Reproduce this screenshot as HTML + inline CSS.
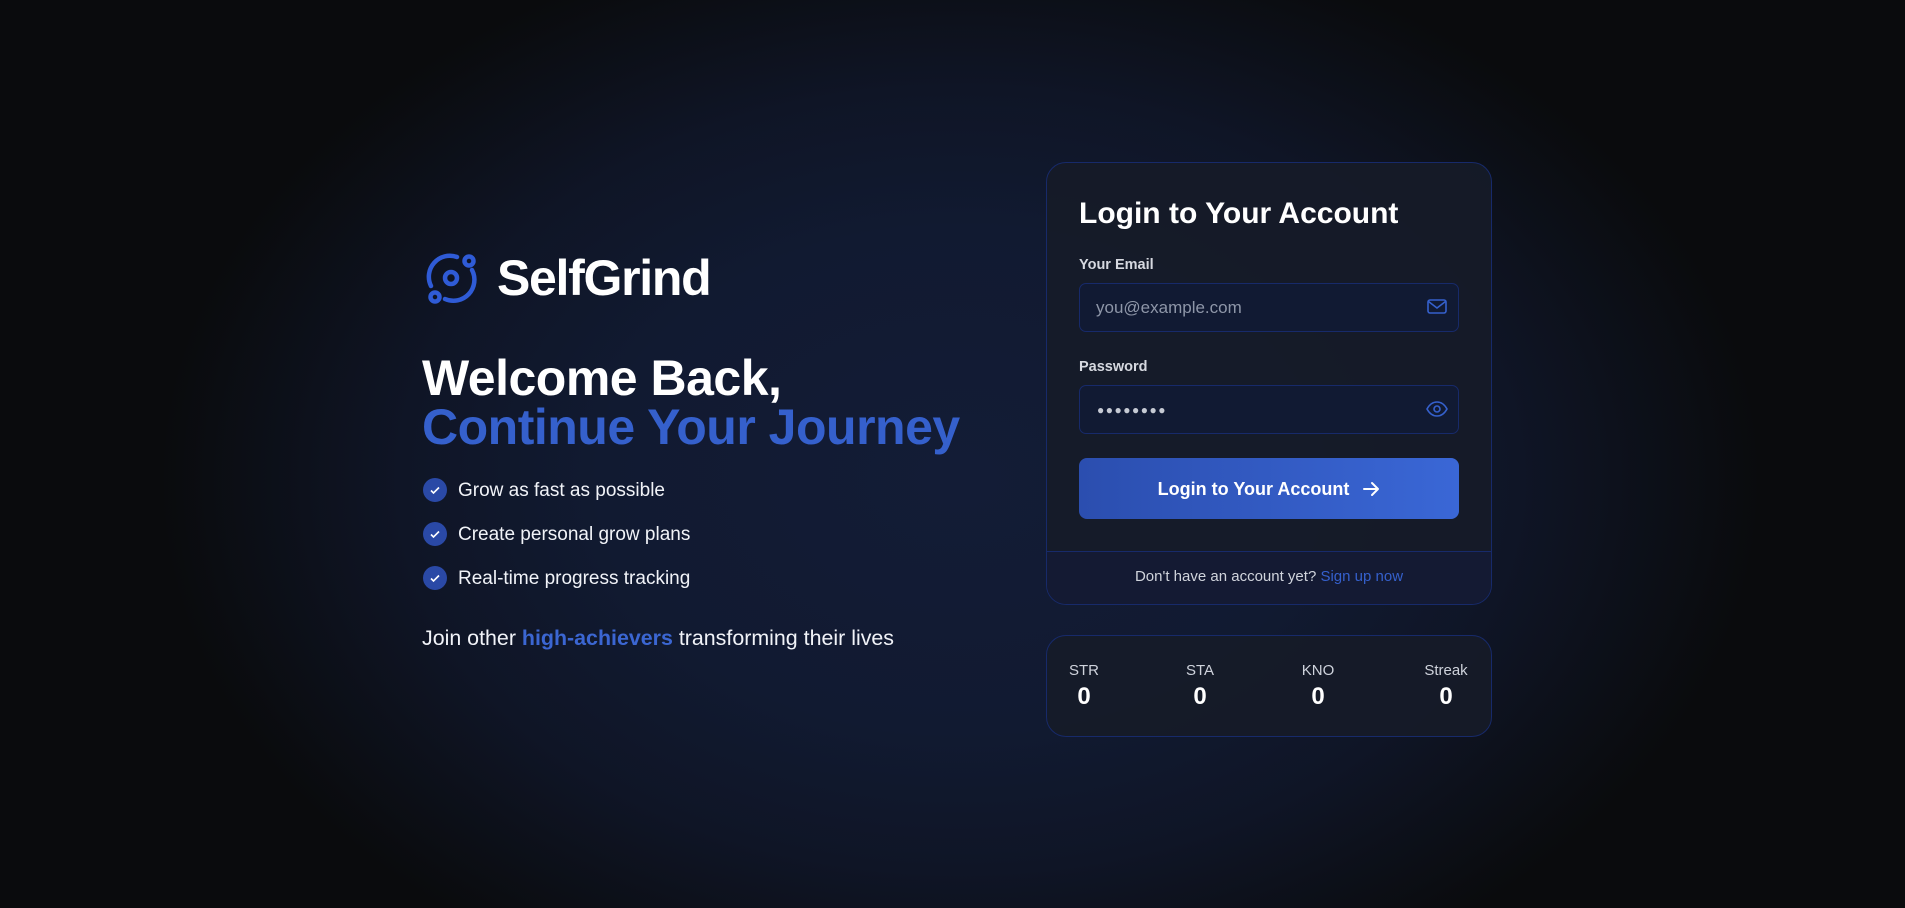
<!DOCTYPE html>
<html><head><meta charset="utf-8"><style>
*{margin:0;padding:0;box-sizing:border-box}
body{width:1905px;height:908px;overflow:hidden;font-family:"Liberation Sans",sans-serif;color:#fff;
background:radial-gradient(ellipse 800px 560px at 960px 480px,#131c36 0%,#111a31 45%,#0f1526 70%,#0a0b0d 100%);position:relative}
.abs{position:absolute}
.check{position:absolute;left:423px;width:24px;height:24px;border-radius:50%;background:#2a49a6}
.check svg{position:absolute;left:6px;top:6px}
.item{position:absolute;left:458px;font-size:19px;color:#f1f3f8}
.card{position:absolute;left:1046px;width:446px;border:1px solid #172a6a;border-radius:20px;background:rgba(22,27,40,0.92)}
.lbl{position:absolute;left:1079px;font-size:14.5px;font-weight:bold;color:#d6d9e0}
.inp{position:absolute;left:1079px;width:380px;height:49px;border:1px solid #172a6a;border-radius:7px;background:#111a33}
.stat{position:absolute;text-align:center;width:80px}
.stat .l{font-size:15px;color:#cfd3dc}
.stat .v{font-size:24px;font-weight:bold;margin-top:4px}
</style></head><body>
<svg class="abs" style="left:420px;top:245px" width="70" height="70" viewBox="0 0 70 70" fill="none" stroke="#2f5bd6" stroke-width="4.5" stroke-linecap="round">
<circle cx="31" cy="33" r="6"/>
<path d="M11 41 A21 21 0 0 1 37 12"/>
<path d="M52 25 A21 21 0 0 1 25 54"/>
<circle cx="49" cy="16" r="4.5"/>
<circle cx="15" cy="52" r="4.5"/>
</svg>
<div class="abs" style="left:497px;top:250px;font-size:50px;font-weight:bold;letter-spacing:-1.3px;line-height:56px">SelfGrind</div>
<div class="abs" style="left:422px;top:354px;font-size:50px;font-weight:bold;line-height:49px;letter-spacing:-0.5px">Welcome Back,<br><span style="color:#3560cc">Continue Your Journey</span></div>
<div class="check" style="top:478px"><svg width="12" height="12" viewBox="0 0 12 12"><path d="M2 6.5l2.5 2.5L10 3.5" stroke="#fff" stroke-width="1.6" fill="none"/></svg></div>
<div class="item" style="top:480px">Grow as fast as possible</div>
<div class="check" style="top:522px"><svg width="12" height="12" viewBox="0 0 12 12"><path d="M2 6.5l2.5 2.5L10 3.5" stroke="#fff" stroke-width="1.6" fill="none"/></svg></div>
<div class="item" style="top:524px">Create personal grow plans</div>
<div class="check" style="top:566px"><svg width="12" height="12" viewBox="0 0 12 12"><path d="M2 6.5l2.5 2.5L10 3.5" stroke="#fff" stroke-width="1.6" fill="none"/></svg></div>
<div class="item" style="top:568px">Real-time progress tracking</div>
<div class="abs" style="left:422px;top:626px;font-size:21.4px;color:#f1f3f8">Join other <span style="color:#3b66d2;font-weight:bold">high-achievers</span> transforming their lives</div>

<div class="card" style="top:162px;height:443px;overflow:hidden">
<div class="abs" style="left:0;top:388px;width:446px;height:56px;border-top:1px solid #172a6a;background:#141a33"></div>
</div>
<div class="abs" style="left:1079px;top:197px;font-size:30px;font-weight:bold">Login to Your Account</div>
<div class="lbl" style="top:257px">Your Email</div>
<div class="inp" style="top:283px"></div>
<div class="abs" style="left:1096px;top:298px;font-size:17px;color:#8e96a8">you@example.com</div>
<svg class="abs" style="left:1427px;top:298px" width="20" height="18" viewBox="0 0 20 18" fill="none" stroke="#3560cc" stroke-width="1.6"><rect x="1" y="2" width="18" height="13" rx="2"/><path d="M1.5 3.5L10 10l8.5-6.5"/></svg>
<div class="lbl" style="top:359px">Password</div>
<div class="inp" style="top:385px"></div>
<div class="abs" style="left:1097px;top:403px;font-size:12px;color:#c6cad4;letter-spacing:1.5px">●●●●●●●●</div>
<svg class="abs" style="left:1426px;top:400px" width="22" height="18" viewBox="0 0 22 18" fill="none" stroke="#3560cc" stroke-width="1.6"><path d="M1 9C4 3.5 7.5 2 11 2s7 1.5 10 7c-3 5.5-6.5 7-10 7S4 14.5 1 9z"/><circle cx="11" cy="9" r="3"/></svg>
<div class="abs" style="left:1079px;top:458px;width:380px;height:61px;border-radius:8px;background:linear-gradient(90deg,#2b4eaf,#3a67d6)"></div>
<div class="abs" style="left:1079px;top:479px;width:380px;text-align:center;font-size:18px;font-weight:bold">Login to Your Account <svg style="vertical-align:-3px;margin-left:8px" width="18" height="18" viewBox="0 0 18 18" fill="none" stroke="#fff" stroke-width="2" stroke-linecap="round" stroke-linejoin="round"><path d="M2 9h14M10 3l6 6-6 6"/></svg></div>
<div class="abs" style="left:1046px;top:568px;width:446px;text-align:center;font-size:15px;color:#d0d4dc">Don't have an account yet? <span style="color:#3560cc">Sign up now</span></div>

<div class="card" style="top:635px;height:102px"></div>
<div class="stat" style="left:1044px;top:662px"><div class="l">STR</div><div class="v">0</div></div>
<div class="stat" style="left:1160px;top:662px"><div class="l">STA</div><div class="v">0</div></div>
<div class="stat" style="left:1278px;top:662px"><div class="l">KNO</div><div class="v">0</div></div>
<div class="stat" style="left:1406px;top:662px"><div class="l">Streak</div><div class="v">0</div></div>
</body></html>
